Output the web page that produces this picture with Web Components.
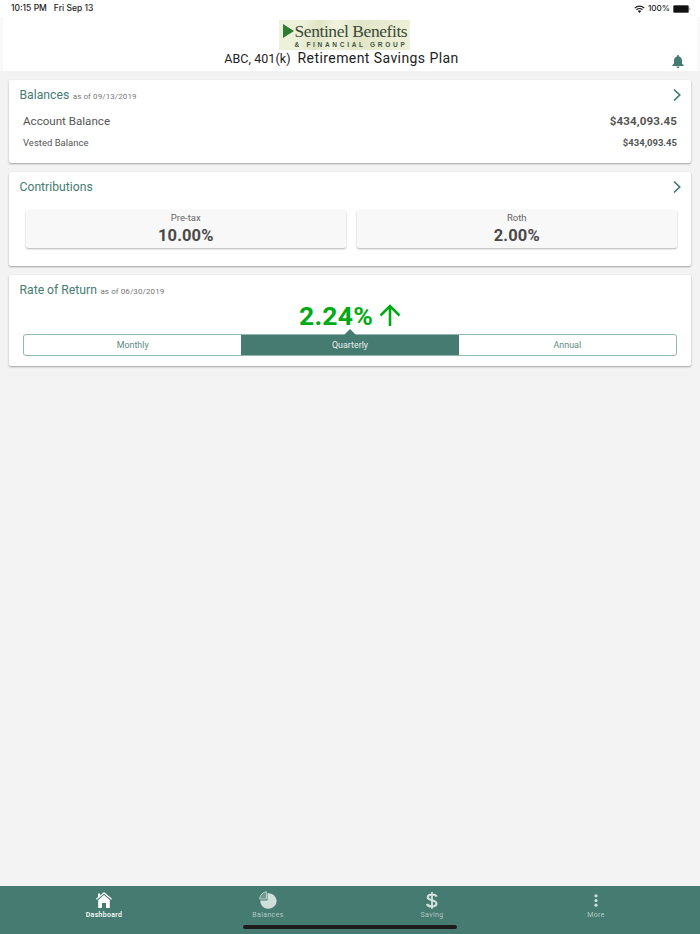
<!DOCTYPE html>
<html><head><meta charset="utf-8">
<style>
html,body{margin:0;padding:0;height:100%}
body{width:700px;height:934px;overflow:hidden;background:#f3f3f3;font-family:Roboto,"Liberation Sans",sans-serif}
app-root{display:flex;flex-direction:column;height:934px}
</style></head><body>
<template id="t-status"><style>
:host{display:flex;justify-content:space-between;align-items:center;height:17px;background:#fff;padding:0 9px 0 11px;font:500 8.500px/17px Inter,"Liberation Sans",sans-serif;color:#222;box-sizing:border-box}
.l{display:flex;gap:7px}.r{display:flex;align-items:center;gap:3px}
.r span{font-size:8.200px}
svg{display:block}
</style><div class="l"><span>10:15 PM</span><span>Fri Sep 13</span></div>
<div class="r"><svg width="11" height="8" viewBox="0 0 11 8"><path d="M.3 2.700a7.400 7.400 0 0 1 10.400 0l-.9.9a6.100 6.100 0 0 0-8.600 0zM2 4.400a5 5 0 0 1 7 0l-.9.9a3.700 3.700 0 0 0-5.200 0zM3.700 6.100a2.600 2.600 0 0 1 3.600 0L5.500 7.900z" fill="#222"/></svg><span>100%</span>
<svg width="18" height="8" viewBox="0 0 18 8"><rect x=".3" y=".3" width="15.400" height="7.400" rx="1.500" fill="#111" stroke="#666" stroke-width=".6"/><path d="M16.500 2.700c.7.2.9.7.9 1.300s-.2 1.100-.9 1.300z" fill="#999"/></svg></div></template>

<template id="t-header"><style>
:host{display:block;position:relative;height:54px;background:#fff;border-left:3px solid #f9f9f9;border-right:3px solid #f9f9f9;box-sizing:border-box}
.wrap{display:flex;flex-direction:column;align-items:center;padding-top:3px}
.logo{width:131px;height:30px;box-sizing:border-box;background:linear-gradient(100deg,#eef1da 0 18%,#dfe4c4 30%,#f1f3df 42%,#e2e6c8 60%,#eef1d8 100%);display:flex;align-items:flex-start;padding:2px 0 0 4px;margin-left:-12px}
.tri{width:0;height:0;border-left:11px solid #2f7d33;border-top:7.500px solid transparent;border-bottom:7.500px solid transparent;margin:2px 1px 0 0;flex:none}
.txt{display:flex;flex-direction:column;color:#3a4a3a}
.a{font:17.500px/19px "Liberation Serif",serif;letter-spacing:-.43px;white-space:nowrap}
.b{font:700 6.500px/7px "Liberation Sans",sans-serif;letter-spacing:2.700px;white-space:nowrap;color:#445544}
.title{font:14px/17px Roboto,sans-serif;color:#222;white-space:nowrap;margin:0 0 0 -17px;letter-spacing:.42px}
.title small{font-size:12.500px;letter-spacing:.05px;margin-right:7px}
svg{position:absolute;right:13px;top:38px}
</style><div class="wrap"><div class="logo"><i class="tri"></i><div class="txt"><span class="a">Sentinel Benefits</span><span class="b">&amp; FINANCIAL GROUP</span></div></div>
<div class="title"><small>ABC, 401(k)</small>Retirement Savings Plan</div></div>
<svg width="12" height="13" viewBox="0 0 12 13"><path d="M6 0c.6 0 1 .4 1 1v.5c2 .5 3 2.100 3 4.200V8.500l1.700 1.700v.8H.3v-.8L2 8.500V5.700C2 3.600 3 2 5 1.500V1c0-.6.4-1 1-1zM4.500 11.500h3c0 .9-.7 1.500-1.500 1.500s-1.500-.6-1.500-1.500z" fill="#467b71"/></svg></template>

<template id="t-card"><style>
:host{display:block;background:#fff;border-radius:2px;box-shadow:0 1px 2px rgba(0,0,0,.35);margin:0 9px;position:relative;box-sizing:border-box}
.h{display:flex;align-items:baseline;gap:3.500px;padding:7px 10.500px 0;height:16px;box-sizing:content-box;color:#467b71;font-size:12.200px;line-height:16px}
.s{font-size:8px;color:#777;letter-spacing:.1px}
svg{position:absolute;right:9px;top:8px}
:host([nochev]) svg{display:none}
</style><div class="h"><span></span><span class="s"></span></div>
<svg width="10" height="14" viewBox="0 0 10 14"><path d="M2 1.500 7.700 7 2 12.500" fill="none" stroke="#3f7a70" stroke-width="1.700"/></svg><slot></slot></template>

<template id="t-row"><style>
:host{display:flex;justify-content:space-between;align-items:center;padding:0 14px;color:#555}
:host([big]){font-size:11.600px;height:20px}
:host(:not([big])){font-size:9.500px;height:16px}
b{font-weight:700;letter-spacing:.1px}
:host(:not([big])) b{font-size:9.500px;letter-spacing:0}
</style><span><slot></slot></span><b></b></template>

<template id="t-tile"><style>
:host{display:flex;flex-direction:column;align-items:center;flex:1;height:38px;background:#f8f8f8;border-radius:2px;box-shadow:0 1px 2px rgba(0,0,0,.3);color:#555}
.l{font-size:9.500px;line-height:11px;margin-top:2px;color:#666}
.v{font-size:16.500px;font-weight:700;line-height:20px;color:#4a4a4a;margin-top:3px;letter-spacing:.1px}
</style><span class="l"></span><span class="v"></span></template>

<template id="t-seg"><style>
:host{display:flex;height:22px;margin:0 14px;border:1px solid #94b7b0;border-radius:3px;box-sizing:border-box;position:relative;background:#fff}
</style><slot></slot></template>

<template id="t-segitem"><style>
:host{flex:1;display:flex;align-items:center;justify-content:center;font-size:8.900px;color:#5c8a81}
:host([on]){background:#467b71;color:#e6efed;position:relative}
:host([on])::before{content:"";position:absolute;left:50%;top:-6px;margin-left:-6px;border-left:6px solid transparent;border-right:6px solid transparent;border-bottom:6px solid #467b71}
</style><slot></slot></template>

<template id="t-tabs"><style>
:host{display:flex;height:48px;background:#467b71;position:relative;padding:0 22px 0 22px;margin-top:auto}
i{position:absolute;left:243px;top:39px;width:214px;height:4px;border-radius:2px;background:#1c1c1c}
</style><slot></slot><i></i></template>

<template id="t-tab"><style>
:host{flex:1;display:flex;flex-direction:column;align-items:center;color:#afc9c3;font:400 7px/9px Roboto,sans-serif;letter-spacing:.35px;padding-top:4px;box-sizing:border-box}
:host([on]){color:#fff;font-weight:500;letter-spacing:.3px}
.i{height:20px;display:flex;align-items:center;justify-content:center;margin-bottom:1px}
</style><div class="i"><slot></slot></div><span class="t"></span></template>

<template id="t-rate"><style>
:host{display:flex;justify-content:center;align-items:center;gap:7px;height:24px;color:#00aa14;font-size:26.500px;font-weight:700;letter-spacing:.2px;margin-bottom:7px}
svg{display:block;margin-left:-1px}
</style><span>2.24%</span><svg width="22" height="23" viewBox="0 0 22 23"><path d="M11 22V2M1.500 11.500 11 2l9.500 9.500" fill="none" stroke="#00aa14" stroke-width="2.600"/></svg></template>

<template id="t-root"><style>
:host{display:flex;flex-direction:column;height:934px}
.main{display:flex;flex-direction:column;gap:9px;padding-top:9px}
.b1{padding-top:8px;padding-bottom:9px}
.tiles{display:flex;gap:10.500px;padding:15px 14px 18px 16.500px}
.b3{padding-top:5px;padding-bottom:10px}
</style>
<x-status></x-status><x-header></x-header>
<div class="main">
<x-card title="Balances" sub="as of 09/13/2019"><div class="b1"><x-row big value="$434,093.45">Account Balance</x-row><x-row value="$434,093.45" style="margin-top:3px;margin-bottom:4px">Vested Balance</x-row></div></x-card>
<x-card title="Contributions"><div class="tiles"><x-tile label="Pre-tax" value="10.00%"></x-tile><x-tile label="Roth" value="2.00%"></x-tile></div></x-card>
<x-card nochev title="Rate of Return" sub="as of 06/30/2019"><div class="b3"><x-rate></x-rate><x-seg><x-segitem>Monthly</x-segitem><x-segitem on>Quarterly</x-segitem><x-segitem>Annual</x-segitem></x-seg></div></x-card>
</div>
<x-tabs>
<x-tab on label="Dashboard"><svg width="16" height="16" viewBox="0 0 16 16"><path d="M8 0 16 6.800 15.200 7.800 8 1.800 .8 7.800 0 6.800 2 5.100V1.500h2v1.900zM8 3l5.800 5v8H10v-5H6v5H2.200V8z" fill="#fff"/></svg></x-tab>
<x-tab label="Balances"><svg width="18" height="18" viewBox="0 0 18 18"><path d="M8.500 2.300V9.500H1.300A7.700 7.700 0 0 0 9.500 17.700 8 8 0 0 0 17.700 9.500 8 8 0 0 0 8.500 2.300z" fill="#cfdfdb"/><path d="M7.500 .7V8H.7A7.400 7.400 0 0 1 7.500 .7z" fill="#6f9a91" stroke="#cfdfdb" stroke-width=".8"/></svg></x-tab>
<x-tab label="Saving"><svg width="12" height="17" viewBox="0 0 14 20"><path d="M12.500 5.500C12 3.800 10 3 7 3 4 3 2 4.200 2 6.200c0 4.600 10.200 2.400 10.200 7.400 0 2.200-2.200 3.400-5.200 3.400-3.200 0-5.300-1-6-3" fill="none" stroke="#cfdfdb" stroke-width="2.600"/><path d="M7 .3v19.400" stroke="#cfdfdb" stroke-width="2.200"/></svg></x-tab>
<x-tab label="More"><svg width="4" height="13" viewBox="0 0 4 14"><circle cx="2" cy="2" r="1.700" fill="#cfdfdb"/><circle cx="2" cy="7" r="1.700" fill="#cfdfdb"/><circle cx="2" cy="12" r="1.700" fill="#cfdfdb"/></svg></x-tab>
</x-tabs></template>

<app-root></app-root>
<script>
function def(tag,tid,fn){customElements.define(tag,class extends HTMLElement{
 constructor(){super();this.attachShadow({mode:'open'}).appendChild(document.getElementById(tid).content.cloneNode(true));}
 connectedCallback(){fn&&fn.call(this,this.shadowRoot);}
});}
def('x-status','t-status');def('x-header','t-header');
def('x-card','t-card',function(s){const p=s.querySelectorAll('.h span');p[0].textContent=this.getAttribute('title');p[1].textContent=this.getAttribute('sub')||'';this.removeAttribute('title');});
def('x-row','t-row',function(s){s.querySelector('b').textContent=this.getAttribute('value');});
def('x-tile','t-tile',function(s){s.querySelector('.l').textContent=this.getAttribute('label');s.querySelector('.v').textContent=this.getAttribute('value');});
def('x-seg','t-seg');def('x-segitem','t-segitem');def('x-tabs','t-tabs');
def('x-tab','t-tab',function(s){s.querySelector('.t').textContent=this.getAttribute('label');});
def('x-rate','t-rate');def('app-root','t-root');
</script>
</body></html>
